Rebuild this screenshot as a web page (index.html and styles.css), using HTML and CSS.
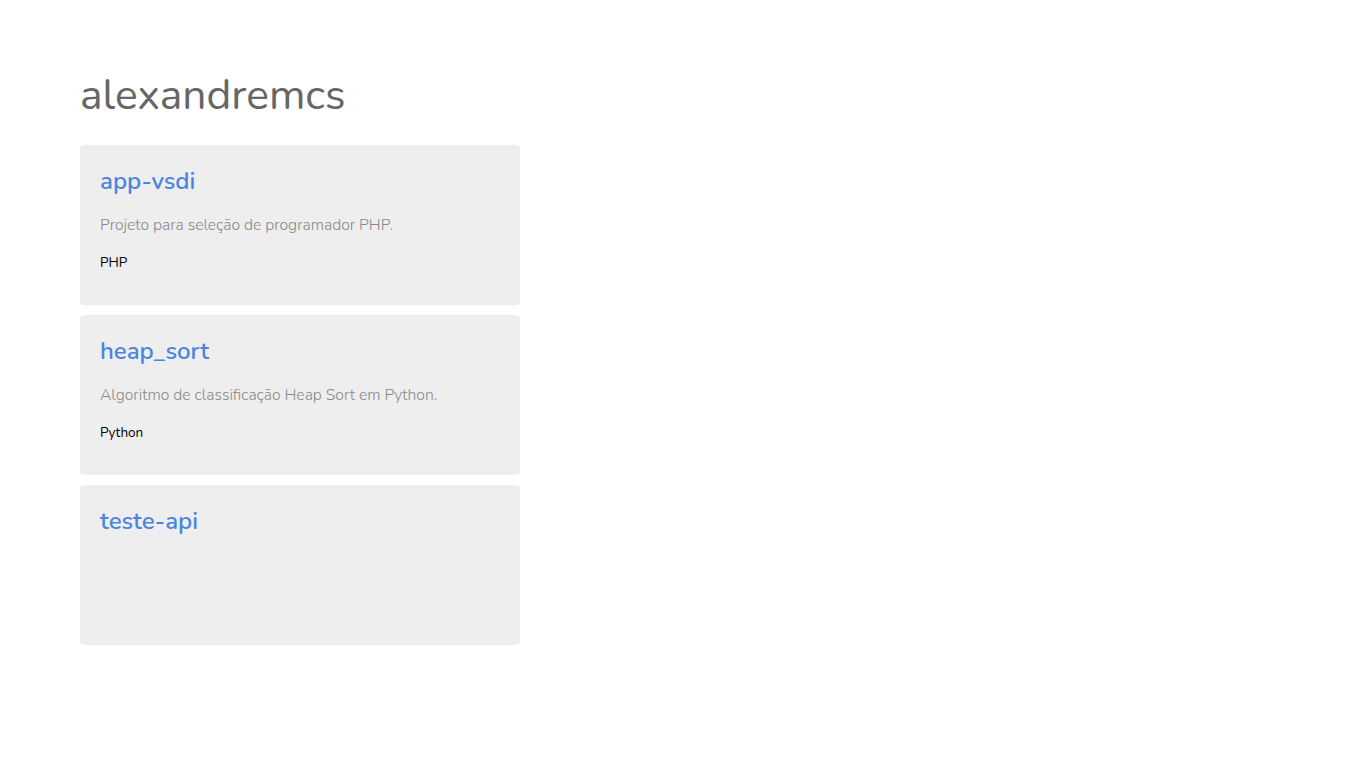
FILE: index.html
```html
<!DOCTYPE html>
<html lang="pt">
<head>
<meta charset="utf-8">
<title>alexandremcs</title>
<link rel="stylesheet" href="styles.css">
</head>
<body>
<div class="page">
  <h1 class="user">alexandremcs</h1>
  <div class="repos">
    <div class="card">
      <h2 class="card-title">app-vsdi</h2>
      <p class="card-desc">Projeto para seleção de programador PHP.</p>
      <p class="card-lang">PHP</p>
    </div>
    <div class="card">
      <h2 class="card-title">heap_sort</h2>
      <p class="card-desc">Algoritmo de classificação Heap Sort em Python.</p>
      <p class="card-lang">Python</p>
    </div>
    <div class="card">
      <h2 class="card-title">teste-api</h2>
    </div>
  </div>
</div>
</body>
</html>
```
FILE: styles.css
```css
html, body {
  margin: 0;
  padding: 0;
  background: #fff;
}
body {
  font-family: "Nunito", "Lato", "Open Sans", sans-serif;
}
.page {
  width: calc(100% + 40px);
  box-sizing: border-box;
  padding: 67px 80px 152px 80px;
}
.user {
  margin: 0 0 21px 0;
  font-size: 42.6px;
  line-height: 57px;
  font-weight: 400;
  color: #666;
}
.repos {
  display: flex;
  flex-direction: column;
  gap: 10px;
}
.card {
  width: 440px;
  height: 160px;
  box-sizing: border-box;
  padding: 20px;
  background: #eee;
  border-radius: 4px;
}
.card-title {
  margin: 0;
  font-size: 24px;
  line-height: 33px;
  font-weight: 600;
  color: #4a86e0;
}
.card-desc {
  margin: 16px 0 0 0;
  font-size: 15.7px;
  line-height: 22px;
  font-weight: 300;
  color: #888;
}
.card-lang {
  margin: 17px 0 0 0;
  font-size: 13.5px;
  line-height: 19px;
  color: #000;
}
```
